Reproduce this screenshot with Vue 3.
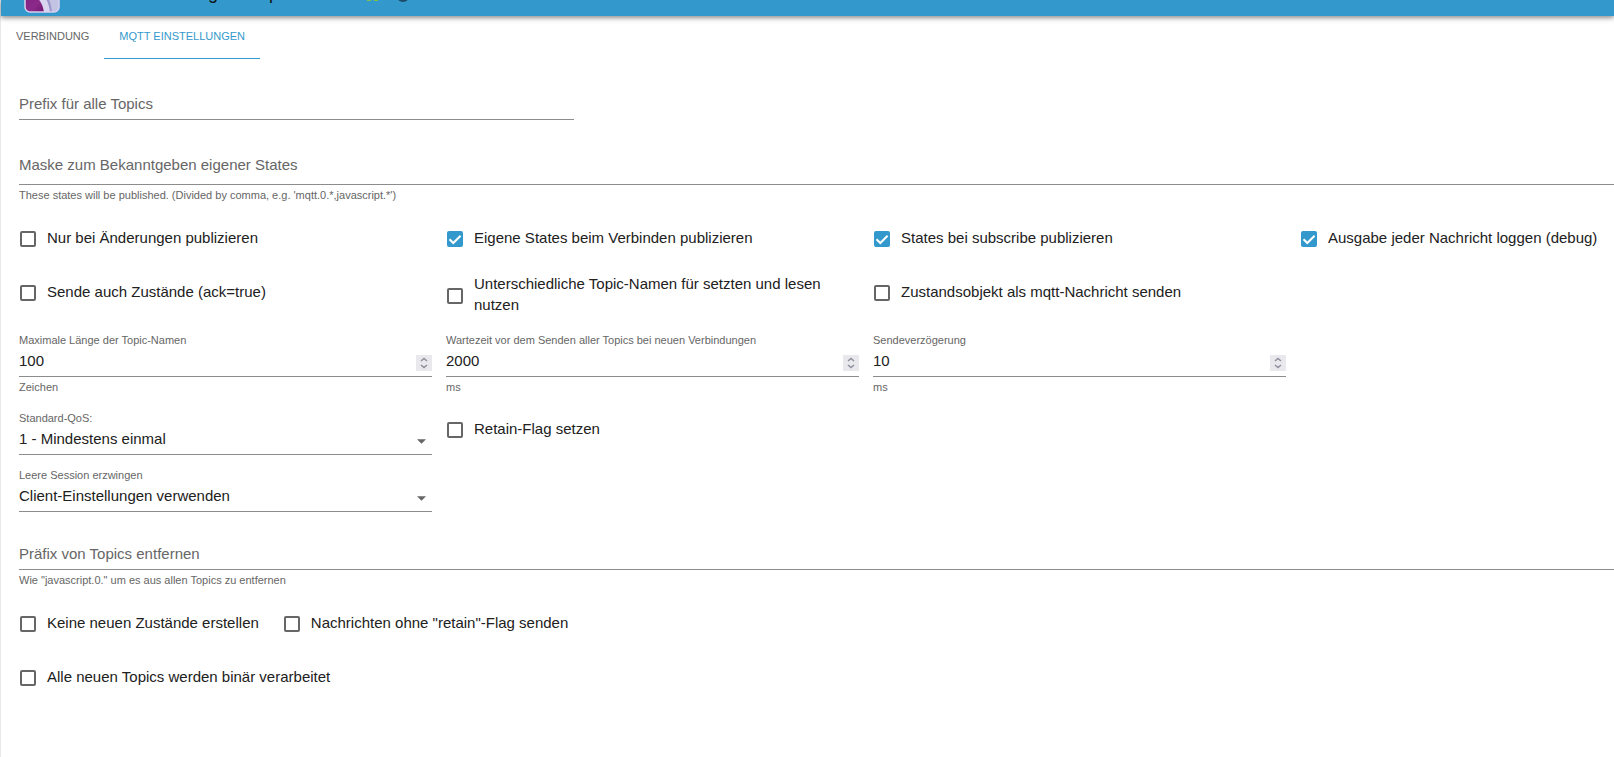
<script setup>
import { reactive } from 'vue'

const tabs = [
  { id: 'connection', title: 'VERBINDUNG', active: false },
  { id: 'mqtt', title: 'MQTT EINSTELLUNGEN', active: true },
]

const form = reactive({
  prefix: '',
  patterns: '',
  onchange: false,
  publishOnConnect: true,
  publishOnSubscribe: true,
  debug: true,
  sendAck: false,
  extraSet: false,
  stateObject: false,
  maxTopic: 100,
  connectDelay: 2000,
  sendInterval: 10,
  qos: '1',
  retain: false,
  session: 'client',
  removePrefix: '',
  ignoreNew: false,
  noRetain: false,
  binary: false,
})

const publishRows = [
  [
    { key: 'onchange', label: 'Nur bei Änderungen publizieren' },
    { key: 'publishOnConnect', label: 'Eigene States beim Verbinden publizieren' },
    { key: 'publishOnSubscribe', label: 'States bei subscribe publizieren' },
    { key: 'debug', label: 'Ausgabe jeder Nachricht loggen (debug)' },
  ],
  [
    { key: 'sendAck', label: 'Sende auch Zustände (ack=true)' },
    { key: 'extraSet', label: 'Unterschiedliche Topic-Namen für setzten und lesen nutzen' },
    { key: 'stateObject', label: 'Zustandsobjekt als mqtt-Nachricht senden' },
  ],
]

const numbers = [
  { key: 'maxTopic', label: 'Maximale Länge der Topic-Namen', help: 'Zeichen' },
  { key: 'connectDelay', label: 'Wartezeit vor dem Senden aller Topics bei neuen Verbindungen', help: 'ms' },
  { key: 'sendInterval', label: 'Sendeverzögerung', help: 'ms' },
]

const topicRows = [
  [
    { key: 'ignoreNew', label: 'Keine neuen Zustände erstellen' },
    { key: 'noRetain', label: 'Nachrichten ohne "retain"-Flag senden' },
  ],
  [{ key: 'binary', label: 'Alle neuen Topics werden binär verarbeitet' }],
]
</script>

<template>
  <div class="page">
    <header class="bar">
      <div class="bar-inner">
        <svg class="logo" viewBox="0 0 36 36" aria-hidden="true">
          <defs>
            <linearGradient id="lg" x1="0" y1="0" x2="1" y2="1">
              <stop offset="0" stop-color="#7b1f7e" />
              <stop offset="0.6" stop-color="#8c2a8a" />
              <stop offset="1" stop-color="#6d1470" />
            </linearGradient>
            <clipPath id="lc"><rect x="1" y="1" width="34" height="34" rx="5" /></clipPath>
          </defs>
          <g clip-path="url(#lc)">
            <rect width="36" height="36" fill="#c3c3e4" />
            <path d="M0 4C18 6 27 20 28 36H0z" fill="#9d96cc" />
            <path d="M0 7C16 9 25 22 26 36H0z" fill="#d9d5ee" />
            <path d="M0 14C12 16 19 25 20 36H0z" fill="url(#lg)" />
          </g>
          <rect x="1" y="1" width="34" height="34" rx="5" fill="none" stroke="#d9cfee" stroke-width="1.5" />
        </svg>
        <h1 class="title">Instanzeinstellungen: mqtt.0</h1>
        <svg class="status" viewBox="0 0 48 12" aria-hidden="true">
          <path d="M2 0h4v11H2zM9 0h4v11H9z" fill="#7cc04b" />
          <circle cx="38" cy="6" r="6" fill="#1d4a66" />
        </svg>
      </div>
    </header>

    <nav class="tabs" role="tablist">
      <button
        v-for="tab in tabs"
        :key="tab.id"
        type="button"
        role="tab"
        class="tab"
        :class="{ active: tab.active }"
        :aria-selected="tab.active"
      >{{ tab.title }}</button>
    </nav>

    <form class="form" @submit.prevent>
      <div class="field prefix">
        <input v-model="form.prefix" class="control" type="text" aria-label="Prefix für alle Topics" placeholder="Prefix für alle Topics" />
      </div>

      <div class="field patterns">
        <textarea v-model="form.patterns" class="control area" rows="1" aria-label="Maske zum Bekanntgeben eigener States" placeholder="Maske zum Bekanntgeben eigener States"></textarea>
        <p class="help">These states will be published. (Divided by comma, e.g. 'mqtt.0.*,javascript.*')</p>
      </div>

      <div class="checks">
        <div v-for="(row, i) in publishRows" :key="i" class="grid">
          <label v-for="c in row" :key="c.key" class="check">
            <span class="tick">
              <input v-model="form[c.key]" type="checkbox" />
              <svg viewBox="0 0 16 16" aria-hidden="true"><path d="M2.5 8.2 6.3 12 13.6 4.7" /></svg>
            </span>
            <span class="check-text">{{ c.label }}</span>
          </label>
        </div>
      </div>

      <div class="grid numbers">
        <div v-for="n in numbers" :key="n.key" class="field">
          <label class="caption" :for="n.key">{{ n.label }}</label>
          <div class="wrap">
            <input :id="n.key" v-model="form[n.key]" class="control" type="number" />
            <svg class="spin" viewBox="0 0 16 16" aria-hidden="true">
              <rect width="16" height="16" />
              <path d="M5 6 8 3.4 11 6M5 10 8 12.6 11 10" />
            </svg>
          </div>
          <p class="help">{{ n.help }}</p>
        </div>
      </div>

      <div class="grid qos">
        <div class="field">
          <label class="caption" for="qos">Standard-QoS:</label>
          <div class="wrap">
            <select id="qos" v-model="form.qos" class="control">
              <option value="0">0 - Höchstens einmal</option>
              <option value="1">1 - Mindestens einmal</option>
              <option value="2">2 - Genau einmal</option>
            </select>
            <svg class="arrow" viewBox="0 0 10 5" aria-hidden="true"><path d="M0 0h10L5 5z" /></svg>
          </div>
        </div>
        <label class="check">
          <span class="tick">
            <input v-model="form.retain" type="checkbox" />
            <svg viewBox="0 0 16 16" aria-hidden="true"><path d="M2.5 8.2 6.3 12 13.6 4.7" /></svg>
          </span>
          <span class="check-text">Retain-Flag setzen</span>
        </label>
      </div>

      <div class="grid session">
        <div class="field">
          <label class="caption" for="session">Leere Session erzwingen</label>
          <div class="wrap">
            <select id="session" v-model="form.session" class="control">
              <option value="client">Client-Einstellungen verwenden</option>
            </select>
            <svg class="arrow" viewBox="0 0 10 5" aria-hidden="true"><path d="M0 0h10L5 5z" /></svg>
          </div>
        </div>
      </div>

      <div class="field remove">
        <input v-model="form.removePrefix" class="control" type="text" aria-label="Präfix von Topics entfernen" placeholder="Präfix von Topics entfernen" />
        <p class="help">Wie "javascript.0." um es aus allen Topics zu entfernen</p>
      </div>

      <div class="checks">
        <div v-for="(row, i) in topicRows" :key="i" class="line">
          <label v-for="c in row" :key="c.key" class="check">
            <span class="tick">
              <input v-model="form[c.key]" type="checkbox" />
              <svg viewBox="0 0 16 16" aria-hidden="true"><path d="M2.5 8.2 6.3 12 13.6 4.7" /></svg>
            </span>
            <span class="check-text">{{ c.label }}</span>
          </label>
        </div>
      </div>
    </form>
  </div>
</template>

<style>
body {
  margin: 0;
  background: #fff;
}
</style>

<style scoped>
.page {
  box-sizing: border-box;
  min-height: 100vh;
  border-left: 1px solid #e8e8e8;
  color: #212121;
  font-family: "Liberation Sans", Arial, sans-serif;
  font-size: 15px;
  line-height: 21px;
}
.bar {
  height: 16px;
  background: #3399cc;
  box-shadow: 0 2px 4px rgba(0, 0, 0, 0.35), 0 1px 8px rgba(0, 0, 0, 0.15);
}
.bar-inner {
  display: flex;
  align-items: flex-end;
  height: 100%;
  padding-left: 23px;
  overflow: hidden;
}
.logo {
  flex: none;
  width: 36px;
  height: 36px;
  margin-bottom: 3px;
}
.title {
  flex: none;
  margin: 0 0 13px 14px;
  color: #111;
  font-size: 18px;
  font-weight: 400;
  line-height: 20px;
}
.status {
  flex: none;
  width: 48px;
  height: 12px;
  margin: 0 0 14px 67px;
}
.tabs {
  display: flex;
}
.tab {
  height: 43px;
  padding: 0 15px 2px;
  border: 0;
  border-bottom: 1px solid transparent;
  background: none;
  color: #666;
  font: inherit;
  font-size: 11px;
  line-height: 18px;
}
.tab.active {
  border-bottom-color: #3399cc;
  color: #3399cc;
}
.form {
  padding: 33px 0 33px 18px;
}
.grid {
  display: grid;
  grid-template-columns: repeat(3, 413fr) 314fr;
  column-gap: 14px;
  align-items: start;
}
.checks {
  display: flex;
  flex-direction: column;
  gap: 12px;
  margin-top: 14px;
}
.line {
  display: flex;
  gap: 24px;
}
.numbers {
  margin-top: 11px;
}
.qos {
  margin-top: 13px;
}
.session {
  margin-top: 11px;
}
.prefix {
  width: calc(35% - 3px);
}
.patterns {
  margin-top: 33px;
}
.remove {
  margin-top: 30px;
}
.field {
  display: flex;
  flex-direction: column;
  min-width: 0;
}
.caption,
.help {
  color: #666;
  font-size: 11px;
}
.caption {
  line-height: 18px;
}
.help {
  margin: 2px 0 0;
  line-height: 17px;
}
.wrap {
  position: relative;
  display: flex;
}
.control {
  box-sizing: border-box;
  width: 100%;
  height: 28px;
  margin: 0;
  padding: 0 0 5px;
  border: 0;
  border-bottom: 1px solid #8c8c8c;
  border-radius: 0;
  outline: 0;
  background: none;
  color: inherit;
  font: inherit;
  appearance: none;
}
.control::placeholder {
  color: #666;
  opacity: 1;
}
.area {
  display: block;
  height: 32px;
  padding: 1px 0 7px;
  overflow: hidden;
  resize: none;
}
input[type="number"] {
  appearance: textfield;
}
.spin {
  position: absolute;
  right: 0;
  bottom: 6px;
  width: 16px;
  height: 16px;
}
.spin rect {
  fill: #e9e9ed;
}
.spin path {
  fill: none;
  stroke: #8f8f9d;
  stroke-width: 1.5;
}
.arrow {
  position: absolute;
  right: 6px;
  bottom: 11px;
  width: 9px;
  height: 5px;
  fill: #666;
}
.check {
  display: flex;
  align-items: center;
  gap: 11px;
  min-height: 42px;
  padding-left: 1px;
}
.tick {
  display: grid;
  flex: none;
  width: 16px;
  height: 16px;
}
.tick input,
.tick svg {
  grid-area: 1 / 1;
  box-sizing: border-box;
  width: 16px;
  height: 16px;
  margin: 0;
}
.tick input {
  border: 2px solid #666;
  border-radius: 2px;
  appearance: none;
}
.tick input:checked {
  border-color: #3399cc;
  background: #3399cc;
}
.tick svg {
  visibility: hidden;
  fill: none;
  stroke: #fff;
  stroke-width: 2;
  pointer-events: none;
}
.tick input:checked + svg {
  visibility: visible;
}
.check-text {
  padding: 1px 0 5px;
}
</style>
